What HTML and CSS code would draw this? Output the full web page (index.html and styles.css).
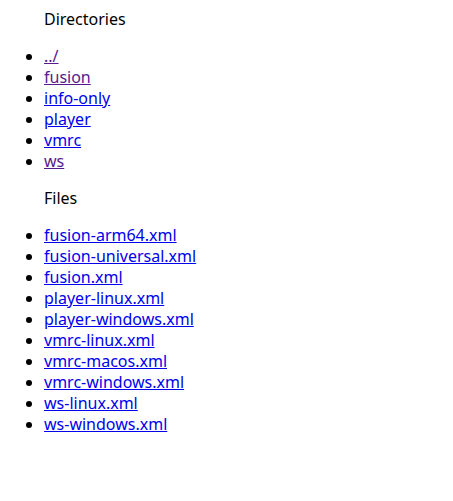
FILE: index.html
```html
<!DOCTYPE html>
<html>
<head>
<meta charset="utf-8">
<title>Index</title>
<link rel="stylesheet" href="styles.css">
</head>
<body>
<div class="section-title">Directories</div>
<ul class="listing">
<li><a class="visited" href="#">../</a></li>
<li><a class="visited" href="#">fusion</a></li>
<li><a href="#">info-only</a></li>
<li><a href="#">player</a></li>
<li><a href="#">vmrc</a></li>
<li><a class="visited" href="#">ws</a></li>
</ul>
<div class="section-title">Files</div>
<ul class="listing">
<li><a href="#">fusion-arm64.xml</a></li>
<li><a href="#">fusion-universal.xml</a></li>
<li><a href="#">fusion.xml</a></li>
<li><a href="#">player-linux.xml</a></li>
<li><a href="#">player-windows.xml</a></li>
<li><a href="#">vmrc-linux.xml</a></li>
<li><a href="#">vmrc-macos.xml</a></li>
<li><a href="#">vmrc-windows.xml</a></li>
<li><a href="#">ws-linux.xml</a></li>
<li><a href="#">ws-windows.xml</a></li>
</ul>
</body>
</html>
```
FILE: styles.css
```css
body {
  margin: 8px;
  padding-top: 1px;
  font-family: "Noto Sans", "Open Sans", sans-serif;
  font-size: 16px;
  line-height: 21px;
  color: #000;
  background: #fff;
}
.section-title {
  padding-left: 36px;
}
.listing {
  margin: 16px 0;
  padding-left: 36px;
}
.listing a {
  color: #0000ee;
  text-decoration: underline;
}
.listing a.visited {
  color: #551a8b;
}
```
